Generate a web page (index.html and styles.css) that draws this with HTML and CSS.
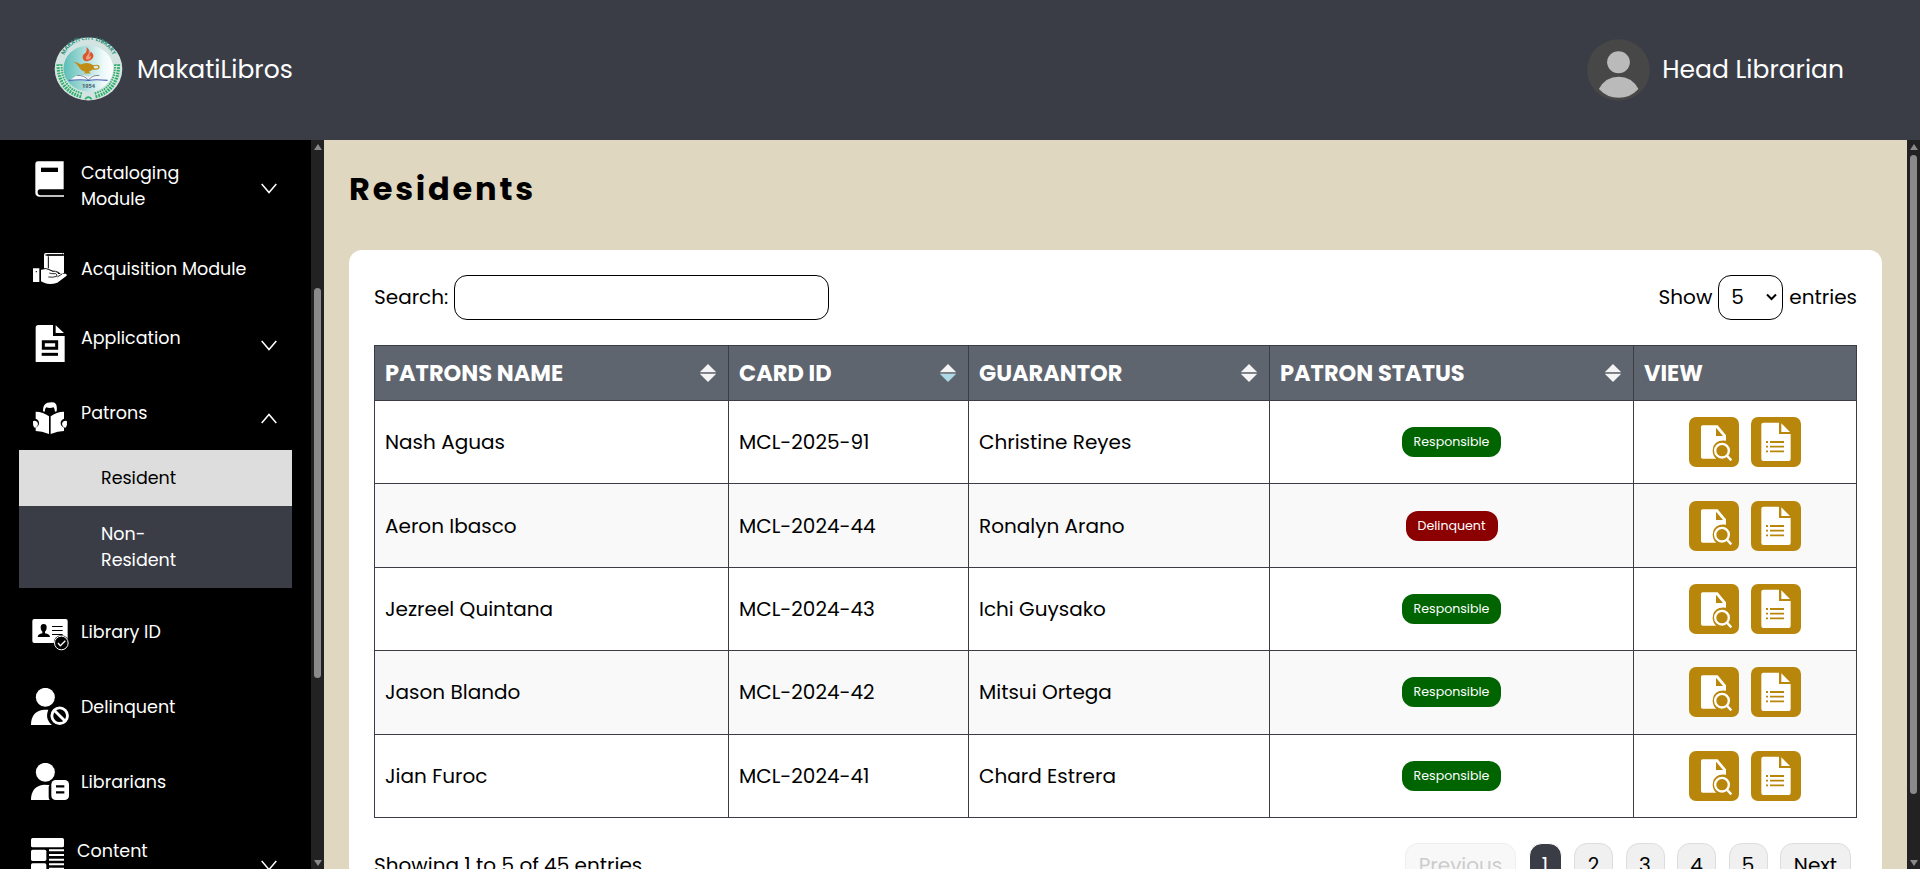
FILE: index.html
```html
<!DOCTYPE html>
<html lang="en">
<head>
<meta charset="utf-8">
<title>MakatiLibros</title>
<link rel="stylesheet" href="styles.css">
</head>
<body>
<svg class="defs" width="0" height="0">
  <symbol id="chev" viewBox="0 0 16 11"><path d="M.7 .9 8 9.6 15.3 .9" fill="none" stroke="#fff" stroke-width="1.5"/></symbol>
  <symbol id="sort" viewBox="0 0 16 18"><path d="M8 0 16 8H0z" fill="#f4f4f4"/><rect y="8.6" width="16" height=".9" fill="#a3a6ab"/><path d="M0 10h16l-8 8z"/></symbol>
  <symbol id="find" viewBox="207 531 150 150">
    <path d="M248 556h45l25 30v16q-11-2-20 1-20 8-20 29 0 15 11 24h-41q-5 0-5-5v-90q0-5 5-5z" fill="#fff"/>
    <path d="M288 563l21 25h-21z" fill="#b8860b"/>
    <circle cx="306" cy="632" r="20.500" fill="none" stroke="#fff" stroke-width="7"/>
    <path d="M320 646l14 15" stroke="#fff" stroke-width="7"/>
  </symbol>
  <symbol id="list" viewBox="393 531 150 150">
    <path d="M430 548h47v34h35v75q0 6-6 6h-76q-6 0-6-6V554q0-6 6-6z" fill="#fff"/>
    <path d="M484 550l26 26h-26z" fill="#fff"/>
    <path d="M438 606h6m6 0h42M438 620h6m6 0h42M438 634h6m6 0h42" stroke="#b8860b" stroke-width="5.500"/>
  </symbol>
</svg>
<header class="topbar">
  <div class="brand">
    <svg class="seal" viewBox="162 108 207 193">
      <defs>
        <linearGradient id="teal"><stop offset="0" stop-color="#5cbdb6"/><stop offset=".8" stop-color="#eef9fa"/><stop offset="1" stop-color="#fff"/></linearGradient>
        <path id="arc" d="M188 181A78 73 0 0 1 343 181"/>
      </defs>
      <ellipse cx="265.500" cy="204.500" rx="102" ry="95" fill="#d3e3e1"/>
      <ellipse cx="265" cy="203" rx="75" ry="69" fill="url(#teal)"/>
      <g fill="none" stroke="#2fae6c">
        <path d="M178 190Q178 268 246 284" stroke-width="18" stroke-dasharray="5 3"/>
        <path d="M352 190Q352 268 284 284" stroke-width="18" stroke-dasharray="5 3"/>
        <path d="M179 192Q180 264 244 283M351 192Q350 264 286 283" stroke="#e2f3ea" stroke-width="2.500"/>
        <path d="M255 296q10-13 20 0" stroke-width="5"/>
      </g>
      <text class="seal-name"><textPath href="#arc" startOffset="50%">MAKATI CITY LIBRARY</textPath></text>
      <path d="M252 179q-10-14 3-22 7-6 4-19 12 8 9 20 5-1 4-6 13 10 6 20-6 9-16 9-6 1-10-2z" fill="#d9562f"/>
      <path d="M258 176q-2-9 5-14 5-5 3-11 6 9 0 17 6-1 6-5 3 8-6 13z" fill="#f0a080"/>
      <path d="M218 183q14 1 24 8 20-10 38 2 19-4 19 6 0 9-23 8-3 5-10 6l7 5h-22l6-5q-15-3-22-17-5-9-17-13z" fill="#c08c16"/>
      <ellipse cx="288" cy="199" rx="7" ry="4" fill="#d5eff0"/>
      <path d="M206 240l24-16q22-4 35 5 15-9 33-5l25 16q-40-5-58 0-20-5-59 0z" fill="#f2f6f8"/>
      <path d="M230 224q22-2 35 14 12-16 33-14" fill="none" stroke="#7d8b99" stroke-width="3"/>
      <path d="M206 239q40-4 59 0 20-4 58 0" fill="none" stroke="#4660b5" stroke-width="3.500"/>
      <text class="seal-year" x="246" y="262">1954</text>
    </svg>
    <span>MakatiLibros</span>
  </div>
  <div class="account">
    <svg class="avatar" viewBox="80 116 191 187">
      <ellipse cx="175.500" cy="209.500" rx="95" ry="93" fill="#474747"/>
      <ellipse cx="175.500" cy="186" rx="34.500" ry="33.500" fill="#bababa"/>
      <path d="M116 267q20-37 60-37t60 37q-25 27-60 27t-60-27z" fill="#bababa"/>
    </svg>
    <span>Head Librarian</span>
  </div>
</header>
<div class="layout">
  <nav class="sidebar">
    <div class="item cataloging">
      <svg class="icon" viewBox="93 60 114 114"><path d="M114 64h77v84h-71q-7 0-7 8 0 10 8 10h71v4h-73q-13-1-13-12V73q0-9 8-9z" fill="#fff"/><path d="M123 83h51v13h-51z" fill="#000"/></svg>
      <span class="wide">Cataloging Module</span>
      <svg class="chev"><use href="#chev"/></svg>
    </div>
    <div class="item acquisition">
      <svg class="icon" viewBox="93 327 114 114"><path d="M137 339h55v4h-52v4h52v52l-9 4q-4-8-16-6l-16-7-19-5v-40q0-6 5-6z" fill="#fff"/><path d="M136 345h52M145 349v36" stroke="#000" stroke-width="3"/><path d="M188 339v7" stroke="#000" stroke-width="1.500"/><path d="M99 385h19v41H99zM123 389q14-6 26 2 6 5 17 5 9 2 9 6l22-1q6 3 1 8l-26 19q-22 7-38 1l-11-5z" fill="#fff"/><path d="M148 399q5 3 19 2 6 3 3 8-10 4-25 2M172 411l14-9M124 388q14-6 27 2 5 4 16 4 9 1 12 8" fill="none" stroke="#000" stroke-width="2.500"/><circle cx="109" cy="395" r="2" fill="#000"/></svg>
      <span>Acquisition Module</span>
    </div>
    <div class="item application">
      <svg class="icon" viewBox="93 555 114 114"><path d="M115 555h44v33h35v78h-87v-103q0-8 8-8zM167 556l25 23h-25z" fill="#fff"/><path d="M130 605h40v20h-40z" fill="none" stroke="#000" stroke-width="9"/><path d="M125 643h49" stroke="#000" stroke-width="9"/></svg>
      <span>Application</span>
      <svg class="chev"><use href="#chev"/></svg>
    </div>
    <div class="item patrons">
      <svg class="icon" viewBox="93 57 114 114"><path d="M129 94q-1-21 13-26 20-4 25 3 5 6 3 23l-5 1q-1-9-4-13-12 4-22 0-4 3-5 13zM107 95q23 0 40 14v53q-22-9-40-9v-10q10-5 10-14t-10-13zM192 95q-23 0-40 14v53q22-9 40-9v-10q-10-5-10-14t10-13zM99 124q5-4 13 2 4 6 0 12-6 8-10 4-4-6-3-18zM201 124q-5-4-13 2-4 6 0 12 6 8 10 4 4-6 3-18z" fill="#fff"/></svg>
      <span>Patrons</span>
      <svg class="chev up"><use href="#chev"/></svg>
    </div>
    <div class="submenu">
      <span class="sub active">Resident</span>
      <span class="sub">Non-Resident</span>
    </div>
    <div class="item library">
      <svg class="icon" viewBox="93 48 114 114"><rect x="97" y="57" width="106" height="72" rx="6" fill="#fff"/><path d="M131 72q10 0 9 12-1 9-5 11v5q14 2 15 11h-37q1-9 14-11v-5q-4-2-5-11-1-12 9-12zM156 78h32v3h-32zm0 12h32v3h-32zm0 12h32v3h-32z" fill="#000"/><circle cx="184" cy="129" r="23" fill="#000"/><circle cx="184" cy="129" r="20.500" fill="none" stroke="#fff" stroke-width="3"/><path d="M174 129l7 8 15-15" fill="none" stroke="#fff" stroke-width="4"/></svg>
      <span>Library ID</span>
    </div>
    <div class="item">
      <svg class="icon" viewBox="93 264 114 114"><circle cx="136" cy="292" r="28.500" fill="#fff"/><path d="M93 375q0-42 39-46h13q-9 22 2 36 3 6 9 10z" fill="#fff"/><circle cx="179" cy="347" r="23.500" fill="none" stroke="#fff" stroke-width="8.500"/><path d="M164 332l31 31" stroke="#fff" stroke-width="8.500"/></svg>
      <span>Delinquent</span>
    </div>
    <div class="item">
      <svg class="icon" viewBox="93 489 114 114"><circle cx="136" cy="517" r="28.500" fill="#fff"/><path d="M93 600q0-42 39-46l16 1q-3 5-2 12v24q0 6 3 9z" fill="#fff"/><rect x="154" y="540" width="53" height="60" rx="13" fill="#fff"/><path d="M168 559h25M168 577h25" stroke="#000" stroke-width="7"/></svg>
      <span>Librarians</span>
    </div>
    <div class="item content">
      <svg class="icon" viewBox="93 714 114 114"><rect x="93" y="714" width="99" height="28" rx="5" fill="#fff"/><rect x="93" y="749" width="46" height="34" rx="5" fill="#fff"/><rect x="93" y="790" width="46" height="34" rx="5" fill="#fff"/><path d="M147 751h45M147 765h45M147 779h45M147 793h45M147 806h45" stroke="#fff" stroke-width="6"/></svg>
      <span>Content</span>
      <svg class="chev"><use href="#chev"/></svg>
    </div>
  </nav>
  <div class="scroll side-scroll"><i class="arrow"></i><i class="thumb"></i><i class="arrow down"></i></div>
  <main>
    <h1>Residents</h1>
    <section class="card">
      <div class="controls">
        <label class="search"><span>Search:</span><input type="text"></label>
        <label class="length"><span>Show</span><span class="select">5 <svg viewBox="0 0 11 8"><path d="M1 1.500 5.500 6 10 1.500" fill="none" stroke="#000" stroke-width="2"/></svg></span><span>entries</span></label>
      </div>
      <table>
        <colgroup><col class="c1"><col class="c2"><col class="c3"><col class="c4"><col class="c5"></colgroup>
        <thead><tr>
          <th><div>PATRONS NAME<svg><use href="#sort"/></svg></div></th>
          <th><div class="sorted">CARD ID<svg><use href="#sort"/></svg></div></th>
          <th><div>GUARANTOR<svg><use href="#sort"/></svg></div></th>
          <th><div>PATRON STATUS<svg><use href="#sort"/></svg></div></th>
          <th><div>VIEW</div></th>
        </tr></thead>
        <tbody>
          <tr><td>Nash Aguas</td><td>MCL-2025-91</td><td>Christine Reyes</td><td class="mid"><span class="badge ok">Responsible</span></td><td><div class="actions"><svg><use href="#find"/></svg><svg><use href="#list"/></svg></div></td></tr>
          <tr><td>Aeron Ibasco</td><td>MCL-2024-44</td><td>Ronalyn Arano</td><td class="mid"><span class="badge bad">Delinquent</span></td><td><div class="actions"><svg><use href="#find"/></svg><svg><use href="#list"/></svg></div></td></tr>
          <tr><td>Jezreel Quintana</td><td>MCL-2024-43</td><td>Ichi Guysako</td><td class="mid"><span class="badge ok">Responsible</span></td><td><div class="actions"><svg><use href="#find"/></svg><svg><use href="#list"/></svg></div></td></tr>
          <tr><td>Jason Blando</td><td>MCL-2024-42</td><td>Mitsui Ortega</td><td class="mid"><span class="badge ok">Responsible</span></td><td><div class="actions"><svg><use href="#find"/></svg><svg><use href="#list"/></svg></div></td></tr>
          <tr><td>Jian Furoc</td><td>MCL-2024-41</td><td>Chard Estrera</td><td class="mid"><span class="badge ok">Responsible</span></td><td><div class="actions"><svg><use href="#find"/></svg><svg><use href="#list"/></svg></div></td></tr>
        </tbody>
      </table>
      <div class="footer">
        <span class="info">Showing 1 to 5 of 45 entries</span>
        <div class="pages">
          <span class="page prev">Previous</span><span class="page current">1</span><span class="page">2</span><span class="page">3</span><span class="page">4</span><span class="page">5</span><span class="page next">Next</span>
        </div>
      </div>
    </section>
  </main>
  <div class="scroll main-scroll"><i class="arrow"></i><i class="thumb"></i><i class="arrow down"></i></div>
</div>
</body>
</html>
```
FILE: styles.css
```css
* { box-sizing: border-box; }
html, body { margin: 0; height: 100%; overflow: hidden; }
body {
  display: flex;
  flex-direction: column;
  font-family: Poppins, Inter, "Open Sans", sans-serif;
  color: #000;
  background: #dfd7bf;
}
svg { display: block; flex: none; }
.defs { position: absolute; }

/* Header */
.topbar {
  flex: none;
  height: 140px;
  padding: 0 76px 1px 54px;
  display: flex;
  justify-content: space-between;
  align-items: center;
  background: #3a3d46;
  color: #fff;
  font-size: 25px;
}
.brand { display: flex; align-items: center; gap: 14px; }
.brand span, .account span { margin-top: 1px; }
.seal { width: 69px; height: 64px; margin-top: -2px; }
.seal-name { font: bold 17px "Open Sans", sans-serif; fill: #2b8f7c; text-anchor: middle; }
.seal-year { font: bold 17px "Open Sans", sans-serif; fill: #4b6070; }
.account { display: flex; align-items: center; gap: 12px; }
.avatar { width: 63px; height: 62px; }

.layout {
  flex: 1;
  min-height: 0;
  display: grid;
  grid-template-columns: 311px 13px 1fr 13px;
  grid-template-rows: 729px;
}

/* Sidebar */
.sidebar {
  background: #000;
  color: #fff;
  overflow: hidden;
  font-size: 17.5px;
  line-height: 26px;
}
.item {
  height: 75px;
  padding: 19px 34px 0 31px;
  display: flex;
  align-items: flex-start;
  gap: 12px;
}
.item > span { margin-top: 6px; }
.icon { width: 38px; height: 38px; }
.chev { width: 16px; height: 11px; margin: 21px 0 0 auto; }
.wide { width: 120px; }
.cataloging { height: 97px; padding-top: 20px; }
.cataloging > span { margin-top: 0; }
.cataloging .chev { margin-top: 23px; }
.acquisition { height: 63px; padding-top: 12px; }
.acquisition > span { margin-top: 7px; }
.application { padding-top: 25px; }
.application > span { margin-top: 0; }
.application .chev { margin-top: 15px; }
.patrons { padding-top: 24px; }
.patrons > span { margin-top: 1px; }
.patrons .chev { transform: scaleY(-1); margin-top: 14px; }
.submenu { margin: 0 19px 6px; background: #3a3d46; }
.sub { display: block; padding: 15px 90px 15px 82px; }
.sub:last-child { padding: 15px 82px; }
.sub.active { background: #ddd; color: #000; }
.library { padding-top: 22px; }
.library > span { margin-top: 3px; }
.content { gap: 8px; }
.content > span { margin-top: 0; }
.content .chev { margin-top: 22px; }

/* Scrollbars */
.scroll {
  background: #222;
  display: flex;
  flex-direction: column;
  align-items: center;
  padding: 4px 0 3px;
}
.thumb { width: 7px; border-radius: 4px; background: #8a8a8a; }
.arrow { border: 4px solid transparent; border-top: 0; border-bottom: 6px solid #8a8a8a; }
.arrow.down { margin-top: auto; border-top: 6px solid #8a8a8a; border-bottom: 0; }
.side-scroll .thumb { height: 390px; margin-top: 138px; }
.main-scroll .thumb { height: 639px; margin-top: 5px; }

/* Content */
main { padding: 28px 25px 0; overflow: hidden; background: #dfd7bf; }
h1 { margin: 0 0 40px; font-size: 32px; line-height: 42px; letter-spacing: 2.8px; }
.card {
  height: 700px;
  padding: 25px;
  border-radius: 13px;
  background: #fff;
  font-size: 20px;
}
.controls { display: flex; justify-content: space-between; height: 45px; margin-bottom: 25px; }
.search, .length { display: flex; align-items: center; gap: 6px; }
.search > span:first-child { width: 74px; }
.search > span, .length > span:not(.select) { margin-top: -1px; }
.search input { width: 375px; height: 45px; border: 1px solid #000; border-radius: 13px; background: #fff; outline: 0; }
.select {
  width: 65px;
  height: 45px;
  padding: 0 5px 1px 12px;
  display: flex;
  align-items: center;
  justify-content: space-between;
  border: 1px solid #000;
  border-radius: 13px;
}
.select svg { width: 11px; height: 8px; }

table { width: 1483px; table-layout: fixed; border-collapse: collapse; }
.c1 { width: 354px; }
.c2 { width: 240px; }
.c3 { width: 301px; }
.c4 { width: 364px; }
.c5 { width: 223px; }
th, td { border: 1px solid #3a3d46; padding: 0 10px; text-align: left; }
th { height: 55px; padding-right: 12px; background: #5e656f; color: #fff; font-size: 22.5px; }
th div { display: flex; align-items: center; justify-content: space-between; }
th svg { width: 16px; height: 18px; fill: #f4f4f4; }
.sorted svg { fill: #add8e6; }
td { height: 83.4px; }
tbody tr:nth-child(even) { background: #f9f9f9; }
.mid { text-align: center; }
.badge {
  display: inline-block;
  vertical-align: middle;
  margin-bottom: 1px;
  padding: 0 12px;
  border-radius: 12px;
  color: #fff;
  font-size: 12.6px;
  line-height: 30px;
}
.ok { background: #006400; }
.bad { background: #8b0000; }
.actions { display: flex; justify-content: center; gap: 12px; }
.actions svg { width: 50px; height: 50px; border-radius: 7px; background: #b8860b; }

.footer { margin-top: 25px; display: flex; justify-content: space-between; align-items: flex-start; }
.info { line-height: 45px; }
.pages { display: flex; padding-right: 6px; }
.page {
  width: 39px;
  height: 45px;
  margin-left: 12.500px;
  border: 1px solid #ddd;
  border-radius: 13px;
  background: #f0f0f0;
  text-align: center;
  line-height: 43px;
}
.current { width: 33px; background: #3a3d46; border-color: #fff; color: #fff; }
.prev { width: 111px; background: #f8f8f8; border-color: #eee; color: #ccc; }
.next { width: 71px; }
```
